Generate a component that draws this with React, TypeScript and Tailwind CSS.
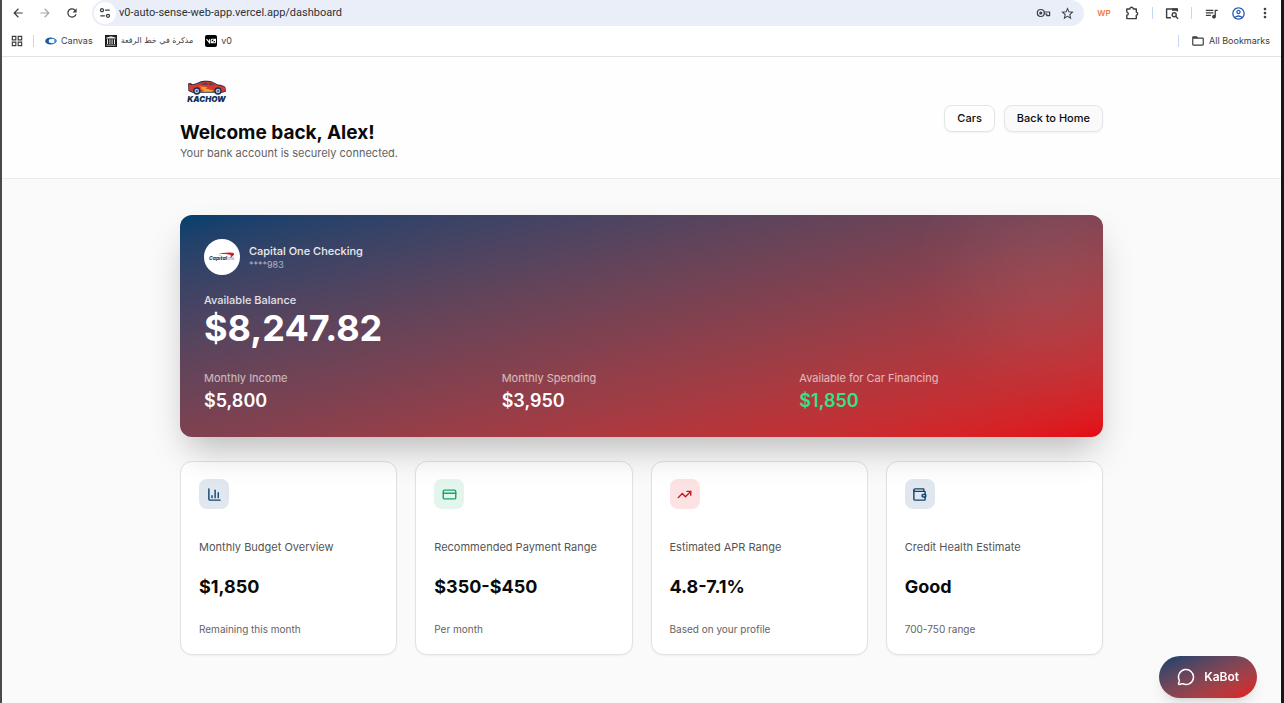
import type { ReactNode } from "react";
import { ChartColumn, CreditCard, MessageCircle, TrendingUp, Wallet } from "lucide-react";
import {
  MdArrowBack,
  MdArrowForward,
  MdFolderOpen,
  MdMoreVert,
  MdOutlineAccountCircle,
  MdOutlineGridView,
  MdQueueMusic,
  MdRefresh,
  MdStarBorder,
} from "react-icons/md";

function IconButton({ label, children, className = "" }: { label: string; children: ReactNode; className?: string }) {
  return (
    <button type="button" aria-label={label} className={`flex h-4 w-4 shrink-0 items-center justify-center ${className}`}>
      {children}
    </button>
  );
}

function TuneIcon() {
  return (
    <svg viewBox="0 0 12 12" className="h-3 w-3" fill="none" stroke="currentColor" strokeWidth="1.3" strokeLinecap="round">
      <circle cx="3" cy="3.2" r="1.5" />
      <path d="M6.6 3.2h3.6M1.8 8.8h3.6" />
      <circle cx="9" cy="8.8" r="1.5" />
    </svg>
  );
}

function KeyIcon() {
  return (
    <svg viewBox="0 0 15 10" className="h-[10px] w-[15px]" fill="none" stroke="currentColor" strokeWidth="1.2">
      <circle cx="4.8" cy="5" r="3.5" />
      <circle cx="4.8" cy="5" r="1" fill="currentColor" />
      <path d="M8 4h5.6v3.6h-2.8V6H8.2" strokeLinejoin="round" />
    </svg>
  );
}

function PuzzleIcon() {
  return (
    <svg viewBox="0 0 14 14" className="h-[14px] w-[14px]" fill="none" stroke="currentColor" strokeWidth="1.4" strokeLinejoin="round">
      <path d="M1.8 3h3.1c0-2.4 3.4-2.4 3.4 0h3v3.1c1.8.2 1.8 2.9 0 3.1v3.4H1.8V9.3c2-.3 2-2.9 0-3.2z" />
    </svg>
  );
}

function TabSearchIcon() {
  return (
    <svg viewBox="0 0 14 13" className="h-[13px] w-[14px]" fill="none" stroke="currentColor" strokeWidth="1.4">
      <path d="M6 10.8H1.6V2h10.8v2.6" strokeLinejoin="round" />
      <path d="M7 2.6h5.6" strokeWidth="2.4" />
      <circle cx="9.2" cy="7.8" r="2" />
      <path d="m10.7 9.3 2.4 2.6" />
    </svg>
  );
}

function CanvasIcon() {
  return (
    <svg viewBox="0 0 12 8" className="h-2 w-3">
      <ellipse cx="5.5" cy="4" rx="5.3" ry="3.6" fill="#1b5c9a" />
      <ellipse cx="7.2" cy="4" rx="3.5" ry="2.2" fill="#f4f9fd" />
      <path d="M8.500 1.600c2.300.2 3.300 1.200 3.300 2.400s-1 2.200-3.300 2.400c1.300-1.300 1.300-3.500 0-4.800z" fill="#3c88cc" />
    </svg>
  );
}

function ArchiveIcon() {
  return (
    <svg viewBox="0 0 12 12" className="h-3 w-3">
      <path fill="#1d1d1d" d="M0 0h12v12H0z" />
      <path fill="#e8e8e8" d="M6 1.2 10.6 2.6v.8H1.4v-.8zM2 4.2h1v4.8H2zM4.4 4.2h1v4.8h-1zM6.6 4.2h1v4.8h-1zM9 4.2h1v4.8H9zM1.4 9.8h9.2v.8H1.4z" />
    </svg>
  );
}

function KachowLogo() {
  return (
    <div className="flex h-[34px] w-[53px] flex-col items-center justify-center">
      <svg viewBox="0 0 40 15" className="h-[15px] w-10" role="img" aria-label="Red race car">
        <path d="M1 3.600 3.500 3l2 1.300c3-.5 5-1.200 7.300-2.500C15.500.400 22 .300 25.500 1.700l5.300 2.800c3.700.3 6.700 1.300 7.700 2.900l.5 4.100-3.600 1.300H5.300L1.400 11z" fill="#1f2d4d" />
        <path d="M1.400 4.200l3.200.8c4-.1 6.200-1.100 8.700-2.300 4-1.400 9-1.200 11.900-.1l5.200 2.600c3.600.4 6.300 1.200 7.400 2.500l.6 3.300-3.300 1H5.300L2 10z" fill="#d63a2f" />
        <path d="M13.500 4.500c2.300-1.500 4.700-1.800 7-1.700v2.200zM21.700 2.900c2.500.2 4 .9 5.700 2.200l-5.500.1z" fill="#4a3f5a" />
        <path d="m12 6.200 8.500 1-2 1.300 8 2-2 1.300H15l2.200-1.700-4.200-.9 2-1.200z" fill="#f6a62b" />
        <g fill="#1f2d4d">
          <circle cx="9.8" cy="11" r="3.7" />
          <circle cx="31" cy="11" r="3.7" />
        </g>
        <g fill="#a9c6da">
          <circle cx="9.8" cy="11" r="2.3" />
          <circle cx="31" cy="11" r="2.3" />
        </g>
        <g fill="#44566f">
          <circle cx="9.8" cy="11" r="1" />
          <circle cx="31" cy="11" r="1" />
        </g>
      </svg>
      <span className="text-[8px] leading-[9px] font-black text-[#12325a] italic">KACHOW</span>
    </div>
  );
}

function CapitalOneLogo() {
  return (
    <div className="flex h-9 w-9 items-center justify-center rounded-full bg-white">
      <svg viewBox="0 0 28 12" className="h-3 w-7" role="img" aria-label="Capital One">
        <path d="M9 3.400C14 1.400 23 .800 25.500 2c1.600 1.200-.6 3.600-3.700 5.200 1.200-1.700 1.900-2.800.4-3.300C19.500 2.900 14 2.800 9 3.400z" fill="#c8202c" />
        <text x="1" y="9" fontSize="5" fontWeight="800" fontStyle="italic" fontFamily="Inter, sans-serif" fill="#134a74">
          Capital
        </text>
        <text x="18.5" y="9" fontSize="4" fontStyle="italic" fontFamily="Inter, sans-serif" fill="#5a7c98">
          One
        </text>
      </svg>
    </div>
  );
}

function BrowserBar() {
  return (
    <div className="border-b border-[#e3e3e5] bg-white text-[#3c3d40]">
      <div className="flex h-[26px] items-center pr-2 pl-2">
        <div className="flex items-center gap-[11px]">
          <IconButton label="Back"><MdArrowBack size={14} /></IconButton>
          <IconButton label="Forward" className="text-[#a5a6a9]"><MdArrowForward size={14} /></IconButton>
          <IconButton label="Reload"><MdRefresh size={14} /></IconButton>
        </div>
        <div className="ml-3 flex h-[26px] min-w-0 flex-1 items-center rounded-full bg-[#e9eef9] pr-[9px] pl-[2px]">
          <IconButton label="Site information" className="h-[22px] w-[22px] rounded-full bg-white"><TuneIcon /></IconButton>
          <input
            aria-label="Address"
            className="ml-[3px] min-w-0 flex-1 bg-transparent font-[Roboto,sans-serif] text-[11px] text-[#303134] outline-none"
            defaultValue="v0-auto-sense-web-app.vercel.app/dashboard"
          />
          <div className="flex items-center gap-2">
            <IconButton label="Passwords"><KeyIcon /></IconButton>
            <IconButton label="Bookmark this tab"><MdStarBorder size={15} /></IconButton>
          </div>
        </div>
        <div className="ml-3 flex items-center gap-[11px]">
          <button type="button" className="mr-px w-4 text-[8px] font-semibold text-[#ee7a3c]">WP</button>
          <IconButton label="Extensions"><PuzzleIcon /></IconButton>
          <span className="ml-px h-3 w-px bg-[#c5d8f0]" />
          <IconButton label="Search tabs"><TabSearchIcon /></IconButton>
          <span className="h-3 w-px bg-[#c5d8f0]" />
          <IconButton label="Media controls"><MdQueueMusic size={15} /></IconButton>
          <IconButton label="Profile" className="text-[#2558b5]"><MdOutlineAccountCircle size={15} /></IconButton>
          <IconButton label="Menu"><MdMoreVert size={16} /></IconButton>
        </div>
      </div>
      <nav aria-label="Bookmarks" className="flex h-[30px] items-center pr-[11px] pl-[7px] text-[9px]">
        <IconButton label="Apps"><MdOutlineGridView size={14} /></IconButton>
        <span className="mr-[11px] ml-2 h-3 w-px bg-[#c5d8f0]" />
        <a href="#canvas" className="flex items-center gap-1"><CanvasIcon />Canvas</a>
        <a href="#note" className="ml-3 flex items-center gap-1">
          <ArchiveIcon />
          <span dir="rtl" className="font-['DejaVu_Sans',sans-serif] text-[8px]">مذكرة في خط الرقعة</span>
        </a>
        <a href="#v0" className="ml-3 flex items-center gap-1">
          <span className="flex h-3 w-3 items-center justify-center rounded-[2px] bg-black">
            <svg viewBox="0 0 10 6" className="h-[6px] w-[10px]" fill="none" stroke="#fff" strokeWidth="1.1">
              <path d="m.5 1.200 3 3.500V1.200M5.200 4.800h3.500c.6 0 .8-.2.8-.8V1.200H6c-.6 0-.8.2-.8.8zM5.600 4.600l3.600-3.200" />
            </svg>
          </span>
          v0
        </a>
        <span className="mr-3 ml-auto h-3 w-px bg-[#c5d8f0]" />
        <a href="#all" className="flex items-center gap-1"><MdFolderOpen size={14} />All Bookmarks</a>
      </nav>
    </div>
  );
}

const flows = [
  { label: "Monthly Income", value: "$5,800", tone: "text-white" },
  { label: "Monthly Spending", value: "$3,950", tone: "text-white" },
  { label: "Available for Car Financing", value: "$1,850", tone: "text-[#2fe586]" },
];

const stats = [
  { icon: ChartColumn, tint: "bg-[#e0e7ee] text-[#0f4470]", label: "Monthly Budget Overview", value: "$1,850", note: "Remaining this month" },
  { icon: CreditCard, tint: "bg-[#e3f5ec] text-[#17a567]", label: "Recommended Payment Range", value: "$350-$450", note: "Per month" },
  { icon: TrendingUp, tint: "bg-[#fde2e3] text-[#c91522]", label: "Estimated APR Range", value: "4.8-7.1%", note: "Based on your profile" },
  { icon: Wallet, tint: "bg-[#e0e7ee] text-[#0f4470]", label: "Credit Health Estimate", value: "Good", note: "700-750 range" },
];

function BalanceCard() {
  return (
    <section className="relative rounded-xl bg-linear-to-br from-[#003f6e] via-[#7f4150] to-[#e50914] p-6 text-white shadow-[0_18px_36px_-8px_rgba(0,0,0,0.28)]">
      <div className="absolute inset-0 overflow-hidden rounded-xl">
        <div className="absolute -top-8 -right-8 h-44 w-44 rounded-full bg-white/5 blur-2xl" />
      </div>
      <div className="relative">
        <div className="flex items-center gap-[9px]">
          <CapitalOneLogo />
          <div>
            <p className="text-[11px] leading-4 font-medium text-white/90">Capital One Checking</p>
            <p className="text-[9px] leading-3 text-white/60">****983</p>
          </div>
        </div>
        <p className="mt-[17px] text-[11px] leading-4 font-medium text-white/85">Available Balance</p>
        <p className="text-[36px] leading-10 font-bold">$8,247.82</p>
        <dl className="mt-[22px] grid grid-cols-3 gap-[18px]">
          {flows.map((f) => (
            <div key={f.label}>
              <dt className="text-[11px] leading-4 text-white/65">{f.label}</dt>
              <dd className={`mt-[3px] text-[18px] leading-6 font-semibold ${f.tone}`}>{f.value}</dd>
            </div>
          ))}
        </dl>
      </div>
    </section>
  );
}

export default function App() {
  return (
    <div className="flex min-h-screen flex-col border-r-[3px] border-l-2 border-r-[#161616] border-l-[#4a4a4a] bg-[#fafafa] font-['Inter',sans-serif] text-[#0a0a0a]">
      <BrowserBar />
      <header className="border-b border-[#ececec] bg-[#fefefe] px-6">
        <div className="mx-auto flex max-w-[923px] items-center justify-between pt-[18px] pb-[17px]">
          <div>
            <KachowLogo />
            <h1 className="mt-3 text-[19px] leading-6 font-bold">Welcome back, Alex!</h1>
            <p className="text-[11px] leading-4 text-[#636363]">Your bank account is securely connected.</p>
          </div>
          <div className="flex gap-[9px] text-[11px] font-medium">
            <button type="button" className="h-[27px] rounded-lg border border-[#e5e5e5] bg-white px-3 shadow-xs">Cars</button>
            <button type="button" className="h-[27px] rounded-lg border border-[#e5e5e5] bg-[#fafafa] px-3 shadow-xs">Back to Home</button>
          </div>
        </div>
      </header>
      <main className="flex-1 px-6 pt-9 pb-12">
        <div className="mx-auto max-w-[923px]">
          <BalanceCard />
          <div className="mt-6 grid grid-cols-4 gap-[18px]">
            {stats.map((s) => (
              <article key={s.label} className="rounded-xl border border-[#e2e2e2] bg-white px-[18px] pt-[17px] pb-[18px] shadow-xs">
                <div className={`flex h-[30px] w-[30px] items-center justify-center rounded-lg ${s.tint}`}>
                  <s.icon size={15} strokeWidth={2.25} />
                </div>
                <h2 className="mt-[30px] text-[11px] leading-4 whitespace-nowrap text-[#555555]">{s.label}</h2>
                <p className="mt-5 text-[18px] leading-6 font-bold">{s.value}</p>
                <p className="mt-6 text-[10px] leading-[13px] text-[#636363]">{s.note}</p>
              </article>
            ))}
          </div>
        </div>
      </main>
      <button
        type="button"
        className="fixed right-[27px] bottom-[5px] z-10 flex h-[42px] items-center gap-[9px] rounded-full bg-linear-to-br from-[#003f6e] to-[#e50914] px-[18px] text-xs font-semibold text-white shadow-lg"
      >
        <MessageCircle size={18} strokeWidth={2} />
        KaBot
      </button>
    </div>
  );
}
